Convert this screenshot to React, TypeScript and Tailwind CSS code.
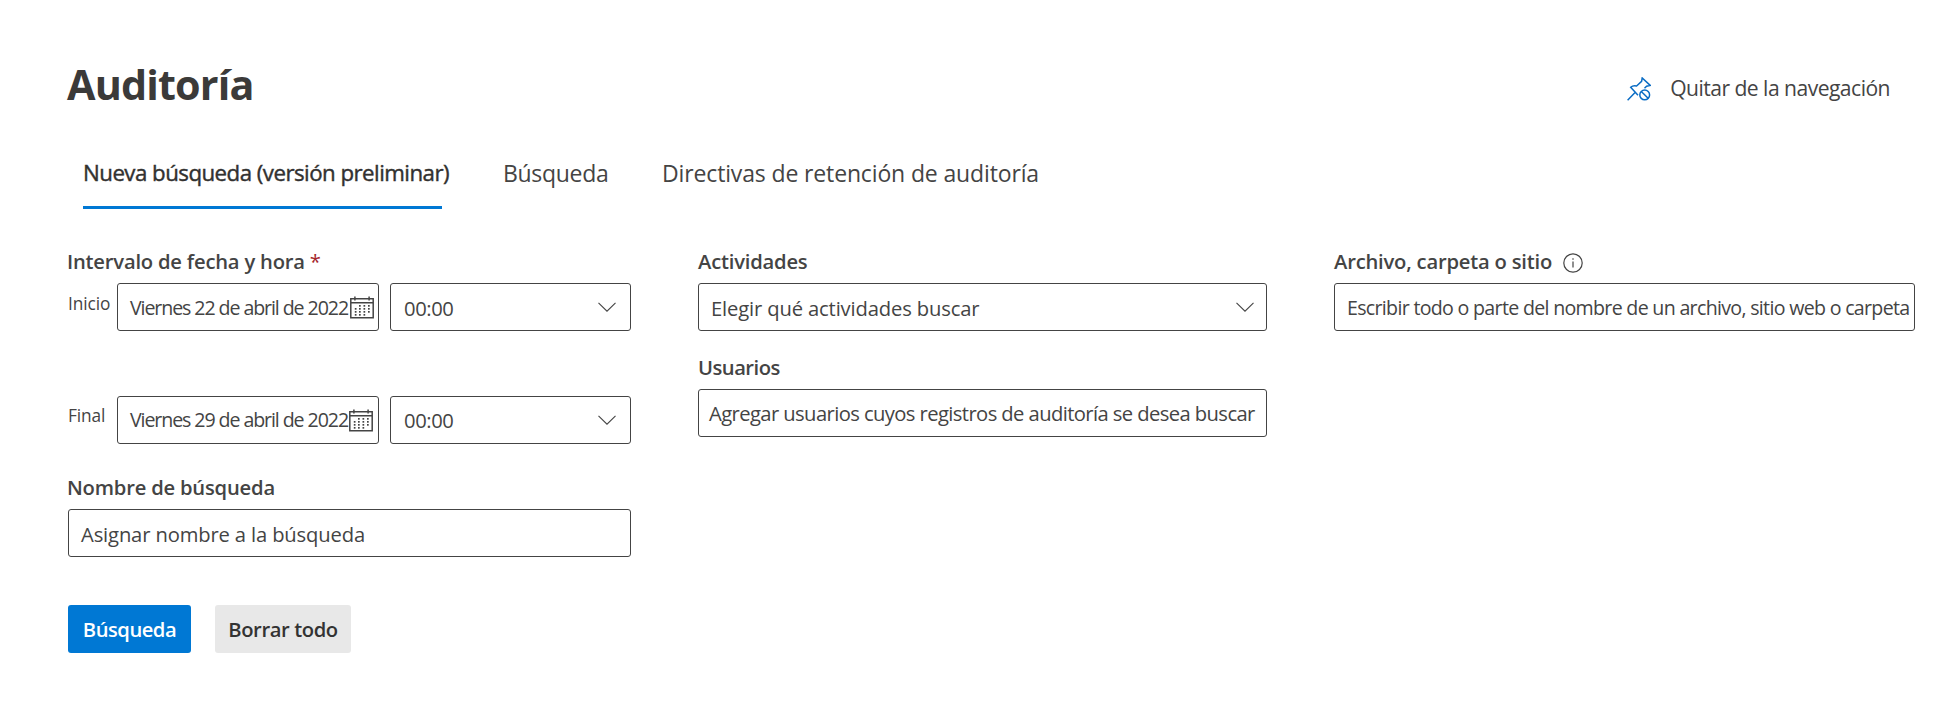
import type { ReactNode } from "react";

function Chevron({ className }: { className: string }) {
  return (
    <svg className={className} viewBox="0 0 18 10" preserveAspectRatio="none" fill="none" stroke="#444" strokeWidth="1.1">
      <path d="M0.5 0.8 9 9.2 17.5 0.8" />
    </svg>
  );
}

const dots = [
  [9, 9], [13.5, 9], [18, 9],
  [4.8, 12], [9, 12], [13.5, 12], [18, 12],
  [4.8, 15], [9, 15], [13.5, 15], [18, 15],
  [4.8, 18], [9, 18], [13.5, 18],
];

function Calendar() {
  return (
    <svg className="h-[23px] w-6 shrink-0" viewBox="0 0 24 23" fill="none" stroke="#444" strokeWidth="1.5">
      <path d="M0.8 2.7h22.4v19.1H0.8zM0.8 6.8h22.4M4.9 0.5v4M19.1 0.5v4" />
      {dots.map(([x, y]) => (
        <rect key={`${x}-${y}`} x={x} y={y} width="1.7" height="1.7" fill="#444" stroke="none" />
      ))}
    </svg>
  );
}

function Unpin() {
  return (
    <svg className="mt-px h-6 w-6 shrink-0" viewBox="0 0 24 24" fill="none" stroke="#0a6cc4" strokeWidth="1.5">
      <path d="M0.6 23.2 7.8 15.8M11 18.2 3.7 10.3C5.5 8.6 7.6 8.5 9.6 9L14.6 4.4 15.2 1 23.2 8.4 19.6 9.2 17.5 11.2" />
      <circle cx="17.7" cy="17.9" r="4.9" />
      <path d="M14.3 14.5 21.1 21.3" />
    </svg>
  );
}

function Label({ children, className }: { children: ReactNode; className: string }) {
  return <div className={`flex h-[35px] whitespace-pre text-[20.2px] leading-[26px] font-semibold ${className}`}>{children}</div>;
}

function Field({ children, className }: { children: ReactNode; className: string }) {
  return (
    <div className={`flex h-12 shrink-0 items-center rounded-[3px] border border-[#444] whitespace-nowrap ${className}`}>
      {children}
    </div>
  );
}

function DateRow({ name, date, textClass, iconClass }: { name: string; date: string; textClass: string; iconClass: string }) {
  return (
    <div className="flex h-12 items-center">
      <span className={`w-[49px] text-[17.3px] tracking-[-0.1px] ${textClass === "pt-0.5" ? "mb-[7px]" : "mb-[9px]"}`}>{name}</span>
      <Field className="w-[262px] pl-[12px] text-[19.6px]">
        <span className={`w-[220px] tracking-[-1.09px] ${textClass}`}>{date}</span>
        <span className={iconClass}><Calendar /></span>
      </Field>
      <Field className="ml-[11px] w-[241px] justify-between pr-[14px] pl-[13px] text-[20.2px]">
        <span className={`tracking-[-0.4px] ${textClass}`}>00:00</span>
        <Chevron className="h-2.5 w-[18px]" />
      </Field>
    </div>
  );
}

export default function App() {
  return (
    <div className="h-[726px] w-[1958px] overflow-hidden bg-white pt-14 pl-[68px] font-['Open_Sans',sans-serif] text-[#444]">
      <header className="flex h-14 items-center justify-between pr-[68px]">
        <h1 className="-ml-px text-[41.3px] leading-[56px] font-bold tracking-[-0.85px] text-[#3b3a39]">Auditoría</h1>
        <div className="flex items-center pt-2">
          <Unpin />
          <span className="ml-[19px] text-[21.1px] leading-[30px] tracking-[-0.53px]">Quitar de la navegación</span>
        </div>
      </header>

      <nav className="mt-11 ml-[15px] flex h-[53px] text-[23px] leading-[34px] whitespace-nowrap">
        <div className="w-[359px] border-b-[3px] border-[#0078d4] text-[22.3px] tracking-[-0.54px] text-[#323130] [-webkit-text-stroke:0.4px_#323130]">
          Nueva búsqueda (versión preliminar)
        </div>
        <div className="ml-[61px] w-[159px] tracking-[-0.3px]">Búsqueda</div>
        <div className="tracking-[-0.14px]">Directivas de retención de auditoría</div>
      </nav>

      <main className="mt-[39px] flex gap-[67px]">
        <section className="w-[563px]">
          <Label className="-ml-px tracking-[-0.2px]">
            Intervalo de fecha y hora <span className="font-normal text-[#a4262c]">*</span>
          </Label>
          <DateRow name="Inicio" date="Viernes 22 de abril de 2022" textClass="pt-0.5" iconClass="" />
          <div className="h-[65px]" />
          <DateRow name="Final" date="Viernes 29 de abril de 2022" textClass="pt-0" iconClass="-ml-px" />
          <Label className="mt-[30px] -ml-px tracking-[-0.2px]">Nombre de búsqueda</Label>
          <Field className="w-full pt-0.5 pl-[12px] text-[20.2px] tracking-[-0.14px]">Asignar nombre a la búsqueda</Field>
          <div className="mt-12 flex gap-6 text-[20.2px] font-semibold">
            <button className="h-12 w-[123px] rounded-[3px] bg-[#0078d4] tracking-[-0.5px] text-white">Búsqueda</button>
            <button className="h-12 w-[136px] rounded-[3px] bg-[#e8e8e8] tracking-[-0.4px] text-[#333]">Borrar todo</button>
          </div>
        </section>

        <section className="w-[569px]">
          <Label className="tracking-[-0.2px]">Actividades</Label>
          <Field className="justify-between pr-3 pl-3 text-[20.2px]">
            <span className="pt-0.5 tracking-[-0.14px]">Elegir qué actividades buscar</span>
            <Chevron className="h-2.5 w-[18px]" />
          </Field>
          <Label className="mt-[23px] tracking-[-0.5px]">Usuarios</Label>
          <Field className="pl-2.5 text-[20.2px] tracking-[-0.59px]">Agregar usuarios cuyos registros de auditoría se desea buscar</Field>
        </section>

        <section className="w-[581px]">
          <Label className="tracking-[-0.2px]">
            Archivo, carpeta o sitio
            <svg className="mt-[5px] ml-[11px] h-5 w-5" viewBox="0 0 20 20" fill="none" stroke="#444" strokeWidth="1.2">
              <circle cx="10" cy="10" r="9.2" />
              <path d="M10 8.4v6.2M10 5.2v1.6" />
            </svg>
          </Label>
          <Field className="pt-0.5 pl-[12px] text-[19.6px] tracking-[-0.69px]">
            Escribir todo o parte del nombre de un archivo, sitio web o carpeta
          </Field>
        </section>
      </main>
    </div>
  );
}
